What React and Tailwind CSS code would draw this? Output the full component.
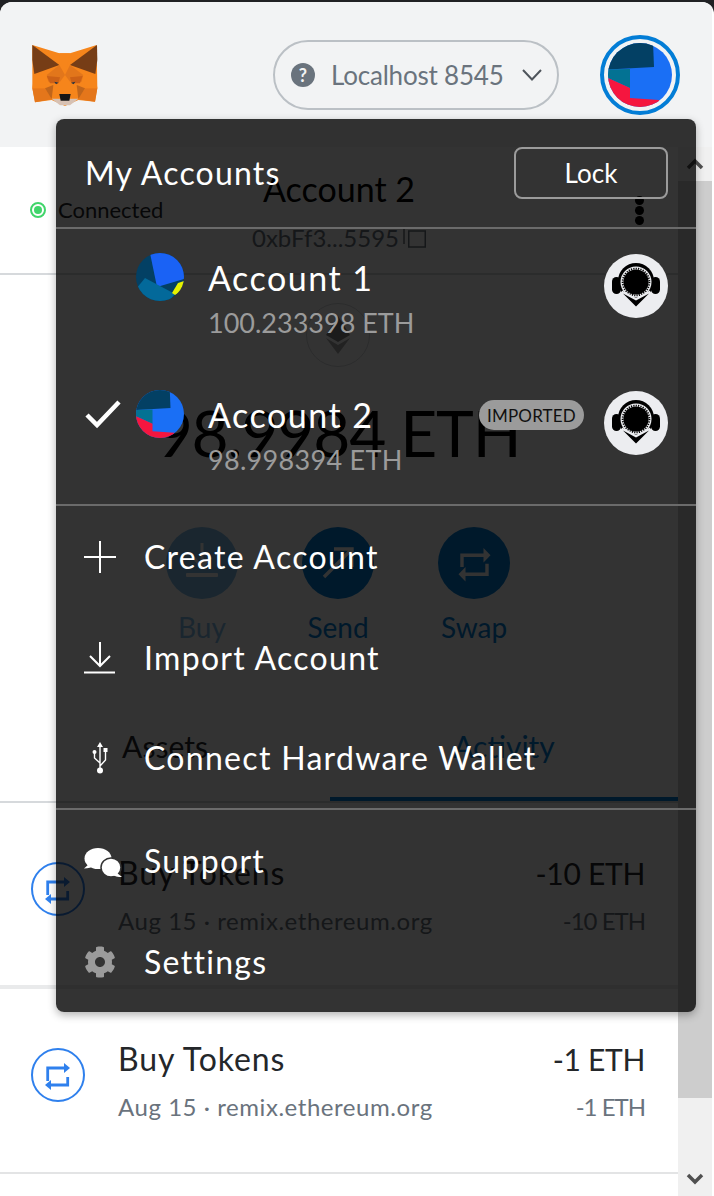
import React from 'react';
import { FaCog } from 'react-icons/fa';

const F = { fontFamily: '"Lato", "Noto Sans", sans-serif' };

function Fox() {
  return (
    <svg width="66" height="62" viewBox="96 132 198 186" className="block">
      <polygon points="97,135 178,160 210,160 290,135 292,265 285,305 235,300 195,318 155,300 105,307 97,265" fill="#f6851b" />
      <polygon points="97,135 178,195 103,222 97,180" fill="#763d16" />
      <polygon points="291,135 210,195 286,222 292,180" fill="#763d16" />
      <polygon points="178,160 210,160 195,225 178,195" fill="#f6851b" />
      <polygon points="140,225 178,195 195,225 180,245 145,245" fill="#e2761b" />
      <polygon points="250,225 210,195 195,225 210,245 245,245" fill="#e2761b" />
      <polygon points="140,228 180,232 175,250 150,250" fill="#cd6116" />
      <polygon points="248,228 210,232 215,250 240,250" fill="#cd6116" />
      <polygon points="163,245 176,248 168,253" fill="#233447" />
      <polygon points="226,245 213,248 221,253" fill="#233447" />
      <polygon points="97,265 135,265 155,298 105,307" fill="#e4761b" />
      <polygon points="292,265 255,265 235,298 285,305" fill="#e4761b" />
      <polygon points="135,265 160,255 155,298" fill="#c0651b" />
      <polygon points="255,265 230,255 235,298" fill="#c0651b" />
      <polygon points="103,222 140,225 135,265 97,265" fill="#f6851b" />
      <polygon points="286,222 250,225 255,265 292,265" fill="#f6851b" />
      <polygon points="155,296 235,296 210,316 180,316" fill="#d7c1b3" />
      <polygon points="178,282 212,282 208,302 182,302" fill="#161616" />
    </svg>
  );
}

function Jazz2({ size }) {
  return (
    <svg width={size} height={size} viewBox="0 0 64 64" className="block rounded-full">
      <rect width="64" height="64" fill="#1a6ff5" />
      <polygon points="45,-1 46,24 0,26.5 0,-1" fill="#034064" />
      <polygon points="0,26.5 22,26 22,45 0,35" fill="#037293" />
      <polygon points="0,35 22,45 22,55 51,57 51,64 0,64" fill="#f5163f" />
    </svg>
  );
}

function Jazz1() {
  return (
    <svg width="48" height="48" viewBox="0 0 48 48" className="block rounded-full">
      <rect width="48" height="48" fill="#034064" />
      <polygon points="14,0 21,34 48,26 48,0" fill="#1a62f5" />
      <polygon points="9,25 39,41 33,48 0,48 0,36" fill="#03699a" />
      <polygon points="42,30 48,28 48,36 39,42 36,40" fill="#e6f100" />
    </svg>
  );
}

function Keyring() {
  return (
    <div className="h-16 w-16 shrink-0 rounded-full bg-[#ecedf0]">
      <svg width="64" height="64" viewBox="0 0 64 64" className="block">
        <rect x="8" y="23" width="9" height="17" rx="4.5" fill="#000" />
        <rect x="47" y="23" width="9" height="17" rx="4.5" fill="#000" />
        <circle cx="32" cy="27" r="18" fill="#000" />
        <circle cx="32" cy="28" r="15.5" fill="#ecedf0" />
        <circle cx="32" cy="28" r="12.6" fill="#000" />
        <circle cx="32" cy="28" r="13.4" fill="none" stroke="#000" strokeWidth="1.8" strokeDasharray="1.2 1.2" />
        <polygon points="18,36.5 32,44 46,36.5 46,47 18,47" fill="#ecedf0" />
        <polygon points="19,39.5 32,46.5 45,39.5 32,52.5" fill="#000" />
      </svg>
    </div>
  );
}

function SwapSmall() {
  return (
    <svg width="54" height="54" viewBox="0 0 54 54" className="block">
      <path d="M16.7 33V20H33M36.7 29V37H20" fill="none" stroke="#2f80ed" strokeWidth="2.8" />
      <polygon points="33,15 39,20 33,25" fill="#2f80ed" />
      <polygon points="20,32 14,37 20,42" fill="#2f80ed" />
    </svg>
  );
}

function ActionBtn({ label, dim, children }) {
  return (
    <div className={`flex w-[72px] flex-col items-center ${dim ? 'opacity-50' : ''}`}>
      <div className="h-[72px] w-[72px] rounded-full bg-[#037dd6]">{children}</div>
      <div className="mt-3 whitespace-nowrap text-[28px] leading-8 text-[#037dd6]">{label}</div>
    </div>
  );
}

function Tx({ amount, border }) {
  return (
    <div className={`flex pl-[31px] pr-[33px] ${border}`}>
      <div className="mt-[59px] h-[54px] w-[54px] shrink-0 rounded-full border-2 border-[#2f80ed]">
        <div className="-m-[2px]"><SwapSmall /></div>
      </div>
      <div className="ml-[33px] flex-1 pt-[52px]">
        <div className="text-[32px] leading-9 tracking-[0.9px] text-[#24272a]">Buy Tokens</div>
        <div className="mt-[14px] whitespace-nowrap text-[24px] leading-8 tracking-[0.55px] text-[#6a737d]">Aug 15 · remix.ethereum.org</div>
      </div>
      <div className="pt-[52px] text-right">
        <div className="text-[30px] leading-9 tracking-[-0.3px] text-[#24272a]">{amount}</div>
        <div className="mt-[14px] text-[24px] leading-8 tracking-[-1px] text-[#6a737d]">{amount}</div>
      </div>
    </div>
  );
}

function MenuItem({ icon, label, h = 'h-[101px]' }) {
  return (
    <div className={`flex items-center pl-[28px] ${h}`}>
      <div className="flex w-[32px] justify-center">{icon}</div>
      <div className="ml-[28px] whitespace-nowrap text-[32px] leading-10 tracking-[1.3px] text-white">{label}</div>
    </div>
  );
}

function Chevron({ up }) {
  return (
    <svg width="18" height="12" viewBox="0 0 18 12" className="block">
      <polyline points={up ? '2,10 9,3 16,10' : '2,2 9,9 16,2'} fill="none" stroke="#505050" strokeWidth="3.5" />
    </svg>
  );
}

export default function App() {
  return (
    <div className="relative h-[1196px] w-[714px] overflow-hidden bg-[#202124] pt-[2px]" style={F}>
      <div className="flex h-[1194px] w-[714px] flex-col overflow-hidden rounded-t-[12px] bg-white pr-[2px]">
        <header className="flex h-[145px] shrink-0 items-start bg-[#f2f3f4]">
          <div className="ml-[32px] mt-[42px]"><Fox /></div>
          <div className="ml-[175px] mt-[38px] flex h-[70px] w-[286px] items-center rounded-full border-2 border-[#bbc0c5] pl-[16px]">
            <div className="flex h-6 w-6 items-center justify-center rounded-full bg-[#6a737d] text-[18px] font-bold leading-none text-[#f2f3f4]">?</div>
            <div className="ml-[16px] whitespace-nowrap text-[26px] leading-8 tracking-[-0.2px] text-[#6a737d]">Localhost 8545</div>
            <svg width="24" height="16" viewBox="0 0 24 16" className="ml-[16px]">
              <polyline points="3,3 12,12.5 21,3" fill="none" stroke="#4f555c" strokeWidth="2" />
            </svg>
          </div>
          <div className="ml-[41px] mt-[33px] flex h-[80px] w-[80px] items-center justify-center rounded-full border-4 border-[#037dd6]">
            <Jazz2 size={64} />
          </div>
        </header>

        <div className="flex min-h-0 flex-1">
          <main className="h-full w-[678px] shrink-0 overflow-hidden bg-white">
            <div className="grid h-[128px] grid-cols-[1fr_auto_1fr] items-center border-b-2 border-[#d6d9dc]">
              <div className="flex items-center pl-[30px]">
                <div className="flex h-4 w-4 items-center justify-center rounded-full border-2 border-[#41d56b]">
                  <div className="h-2 w-2 rounded-full bg-[#41d56b]" />
                </div>
                <span className="ml-3 text-[22px] leading-6 text-[#24272a]">Connected</span>
              </div>
              <div className="flex flex-col items-center pt-[2px]">
                <div className="text-[34px] leading-10 text-black">Account 2</div>
                <div className="mt-[13px] flex items-center text-[24px] leading-8 text-[#6a737d]">
                  0xbFf3...5595
                  <svg width="23" height="20" viewBox="0 0 23 20" className="ml-[4px]">
                    <path d="M1 1V16" stroke="#6a737d" strokeWidth="1.5" />
                    <rect x="5.75" y="3" width="16.5" height="16" fill="none" stroke="#6a737d" strokeWidth="1.5" />
                  </svg>
                </div>
              </div>
              <div className="flex justify-end pr-[34px]">
                <div className="flex flex-col gap-px">
                  <div className="h-[9px] w-[9px] rounded-full bg-black" />
                  <div className="h-[9px] w-[9px] rounded-full bg-black" />
                  <div className="h-[9px] w-[9px] rounded-full bg-black" />
                </div>
              </div>
            </div>

            <div className="mt-[28px] flex flex-col items-center pr-[2px]">
              <div className="flex h-16 w-16 items-center justify-center rounded-full border border-[#d6d9dc]">
                <svg width="24" height="38" viewBox="0 0 24 38">
                  <polygon points="12,0 24,19 12,26 0,19" fill="#888" />
                  <polygon points="12,29 24,22 12,38 0,22" fill="#aaa" />
                </svg>
              </div>
              <div className="mt-[30px] whitespace-nowrap text-[64px] leading-[72px] tracking-[-1.2px] text-black">98.9984 ETH</div>
              <div className="mt-[58px] flex gap-[64px]">
                <ActionBtn label="Buy" dim>
                  <svg width="72" height="72" viewBox="0 0 72 72" className="block">
                    <path d="M36 16V38M27 30L36 40L45 30" fill="none" stroke="#fff" strokeWidth="3" />
                    <rect x="20" y="46" width="32" height="4" rx="1" fill="#fff" />
                  </svg>
                </ActionBtn>
                <ActionBtn label="Send">
                  <svg width="72" height="72" viewBox="0 0 72 72" className="block">
                    <path d="M22 50L50 22M32 22H50V40" fill="none" stroke="#fff" strokeWidth="3.4" />
                  </svg>
                </ActionBtn>
                <ActionBtn label="Swap">
                  <svg width="72" height="72" viewBox="0 0 72 72" className="block">
                    <path d="M24 40V28.3H46M49 36.7V47.3H27" fill="none" stroke="#fff" strokeWidth="3.4" />
                    <polygon points="45.5,21 52.5,28.3 45.5,35.5" fill="#fff" />
                    <polygon points="27.5,40 20.5,47.3 27.5,54.5" fill="#fff" />
                  </svg>
                </ActionBtn>
              </div>
            </div>

            <div className="mt-[56px] flex h-[104px] border-b-2 border-[#d6d9dc] pb-0">
              <div className="flex w-[330px] items-start justify-center pt-[29px] text-[30px] leading-9 text-[#24272a]">Assets</div>
              <div className="flex flex-1 items-start justify-center border-b-4 border-[#037dd6] pt-[29px] text-[30px] leading-9 text-[#037dd6]">Activity</div>
            </div>

            <Tx amount="-10 ETH" border="h-[186px] border-b-4 border-[#e9eaeb]" />
            <Tx amount="-1 ETH" border="h-[185px] border-b-2 border-[#e3e4e5]" />
          </main>

          <div className="flex h-full w-[34px] shrink-0 flex-col bg-[#f0f0f0]">
            <div className="flex h-[34px] shrink-0 items-center justify-center"><Chevron up /></div>
            <div className="h-[917px] shrink-0 bg-[#cdcdcd]" />
            <div className="flex-1" />
            <div className="flex h-[34px] shrink-0 items-center justify-center"><Chevron /></div>
          </div>
        </div>
      </div>

      {/* account menu */}
      <div className="absolute left-[56px] top-[119px] flex h-[893px] w-[640px] flex-col rounded-[8px] bg-black/80 shadow-[0_3px_8px_rgba(0,0,0,0.3)]">
        <div className="flex h-[110px] shrink-0 items-start justify-between border-b-2 border-[#6b6b6b] pl-[29px] pr-[28px] pt-[28px]">
          <div className="mt-[6px] text-[32px] leading-10 tracking-[1.2px] text-white">My Accounts</div>
          <div className="flex h-[52px] w-[154px] items-center justify-center rounded-[8px] border-2 border-[#9b9b9b] text-[26px] leading-8 text-white">Lock</div>
        </div>

        <div className="flex h-[137px] shrink-0 pl-[80px] pr-[28px]">
          <div className="mt-[24px]"><Jazz1 /></div>
          <div className="ml-[24px] flex-1 pt-[29px]">
            <div className="text-[34px] leading-10 tracking-[1.5px] text-white">Account 1</div>
            <div className="mt-[7px] text-[27px] leading-9 text-[#9b9b9b]">100.233398 ETH</div>
          </div>
          <div className="mt-[25px]"><Keyring /></div>
        </div>

        <div className="flex h-[138px] shrink-0 pl-[29px] pr-[28px]">
          <svg width="36" height="30" viewBox="0 0 36 30" className="mt-[33px] shrink-0">
            <polyline points="2,16 12,26 34,3" fill="none" stroke="#fff" strokeWidth="4.5" />
          </svg>
          <div className="ml-[15px] mt-[24px]"><Jazz2 size={48} /></div>
          <div className="ml-[24px] flex-1 pt-[29px]">
            <div className="text-[34px] leading-10 tracking-[1.5px] text-white">Account 2</div>
            <div className="mt-[7px] text-[27px] leading-9 tracking-[0.3px] text-[#9b9b9b]">98.998394 ETH</div>
          </div>
          <div className="mr-[20px] mt-[34px] flex h-[30px] w-[105px] items-center justify-center rounded-full bg-[#9b9b9b] text-[17px] leading-none tracking-[0.2px] text-[#111]">IMPORTED</div>
          <div className="mt-[25px]"><Keyring /></div>
        </div>

        <div className="flex shrink-0 flex-col border-t-2 border-[#6b6b6b]">
          <MenuItem
            label="Create Account"
            icon={<svg width="32" height="32" viewBox="0 0 32 32"><path d="M0 16H32M16 0V32" stroke="#fff" strokeWidth="2" /></svg>}
          />
          <MenuItem
            label="Import Account"
            icon={<svg width="32" height="32" viewBox="0 0 32 32"><path d="M16 0V24M6 14L16 24L26 14M0 30.5H31" fill="none" stroke="#fff" strokeWidth="2" /></svg>}
          />
          <MenuItem
            label="Connect Hardware Wallet"
            h="h-[100px]"
            icon={
              <svg width="16" height="32" viewBox="0 0 16 32">
                <path d="M8 4V28M8 21L2.5 16V11M8 24L13.5 18V9" fill="none" stroke="#fff" strokeWidth="1.4" />
                <polygon points="8,0 11,5 5,5" fill="#fff" />
                <circle cx="8" cy="28.5" r="3" fill="#fff" />
                <circle cx="2.5" cy="10" r="2" fill="#fff" />
                <rect x="11.5" y="6" width="4" height="4" fill="#fff" />
              </svg>
            }
          />
        </div>

        <div className="flex shrink-0 flex-col border-t-2 border-[#6b6b6b]">
          <MenuItem
            label="Support"
            icon={
              <svg width="38" height="30" viewBox="0 0 38 30" className="ml-[6px] mt-[4px] shrink-0 overflow-visible">
                <ellipse cx="14" cy="10.5" rx="13.5" ry="10.5" fill="#fff" />
                <path d="M5 16L0 20.5C4 20.5 8 19.5 11 17Z" fill="#fff" />
                <ellipse cx="27" cy="19.5" rx="10" ry="9.5" fill="#fff" stroke="#333" strokeWidth="1.5" />
                <path d="M33 25L38 29C34 29 30 28.5 28 26Z" fill="#fff" />
              </svg>
            }
          />
          <MenuItem label="Settings" icon={<FaCog size={32} color="#9b9b9b" />} />
        </div>
      </div>
    </div>
  );
}
